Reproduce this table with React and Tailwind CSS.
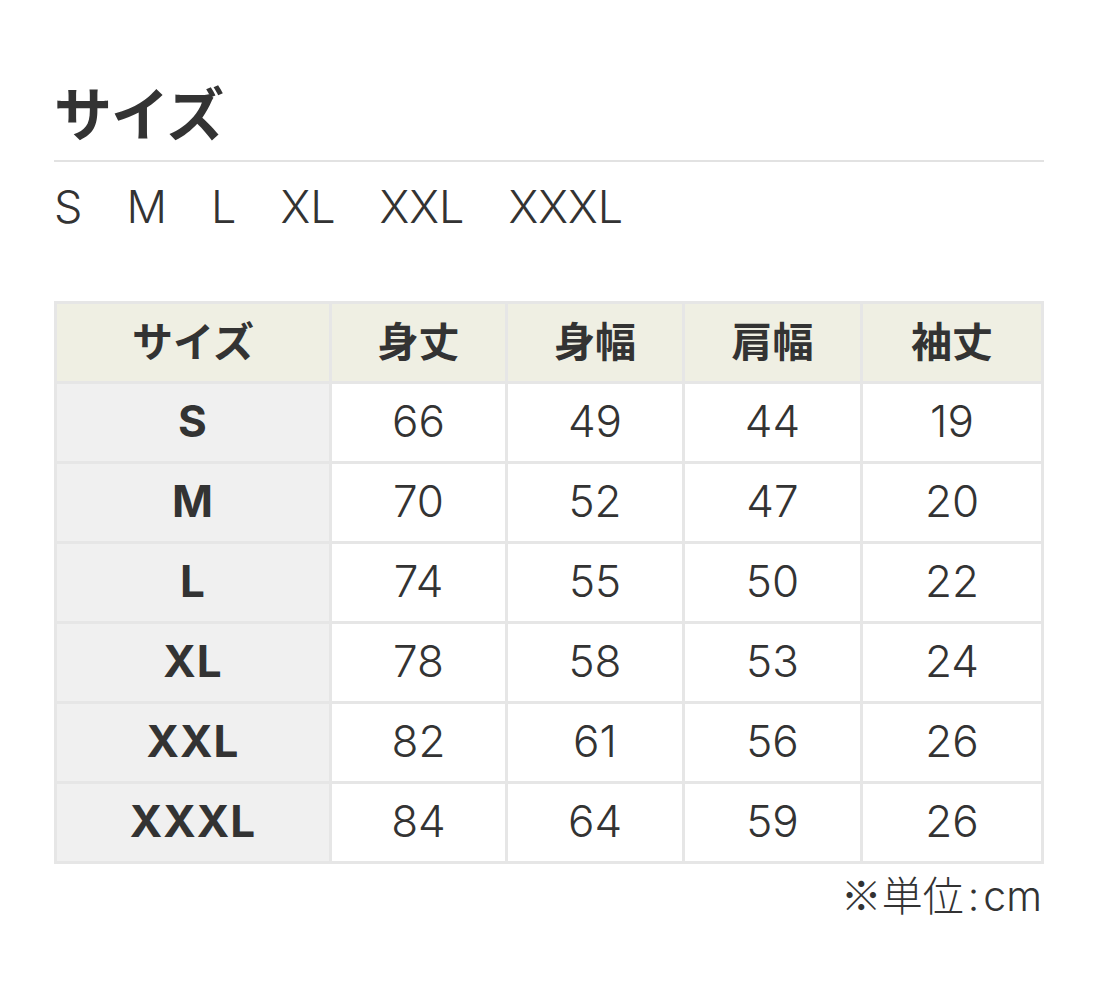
const sizes = ["S", "M", "L", "XL", "XXL", "XXXL"];

const headers = ["サイズ", "身丈", "身幅", "肩幅", "袖丈"];

const rows = [
  ["S", 66, 49, 44, 19],
  ["M", 70, 52, 47, 20],
  ["L", 74, 55, 50, 22],
  ["XL", 78, 58, 53, 24],
  ["XXL", 82, 61, 56, 26],
  ["XXXL", 84, 64, 59, 26],
];

const font = { fontFamily: 'Inter, "Noto Sans CJK JP", sans-serif' };

export default function App() {
  return (
    <div className="min-h-[990px] bg-white text-[#333]" style={font}>
      <div className="ml-[54px] w-[990px] pt-[82px]">
        {/* TITLE */}
        <h1 className="text-[58px] leading-none font-bold tracking-[-1px] [font-family:'Noto_Sans_CJK_JP',sans-serif]">
          サイズ
        </h1>
        <div className="mt-[20px] h-[2px] bg-[#e2e2e2]" />

        {/* SIZE LIST */}
        <div className="mt-[20px] flex gap-[44px] text-[45px] leading-[50px] font-light">
          {sizes.map((s) => (
            <span key={s}>{s}</span>
          ))}
        </div>

        {/* TABLE */}
        <div className="mt-[69px] grid grid-cols-[272px_173px_174px_175px_178px] gap-[3px] bg-[#e6e6e6] p-[3px]">
          {headers.map((h) => (
            <div
              key={h}
              className="h-[77px] pb-[6px] flex items-center justify-center bg-[#efefe3] text-[41px] font-bold [font-family:'Noto_Sans_CJK_JP',sans-serif]"
            >
              {h}
            </div>
          ))}
          {rows.map((r) =>
            r.map((v, i) => (
              <div
                key={r[0] + "-" + i}
                className={`h-[77px] pb-[4px] flex items-center justify-center text-[44px] ${
                  i === 0
                    ? "bg-[#f0f0f0] font-bold tracking-[1px]"
                    : "bg-white font-light"
                }`}
              >
                {v}
              </div>
            ))
          )}
        </div>

        {/* NOTE */}
        <div className="mt-[4px] text-right text-[41px] leading-[50px] font-light pr-[2px]">
          <span className="[font-family:'Noto_Sans_CJK_JP',sans-serif]">※単位</span>
          <span className="mx-[4px]">:</span>cm
        </div>
      </div>
    </div>
  );
}
